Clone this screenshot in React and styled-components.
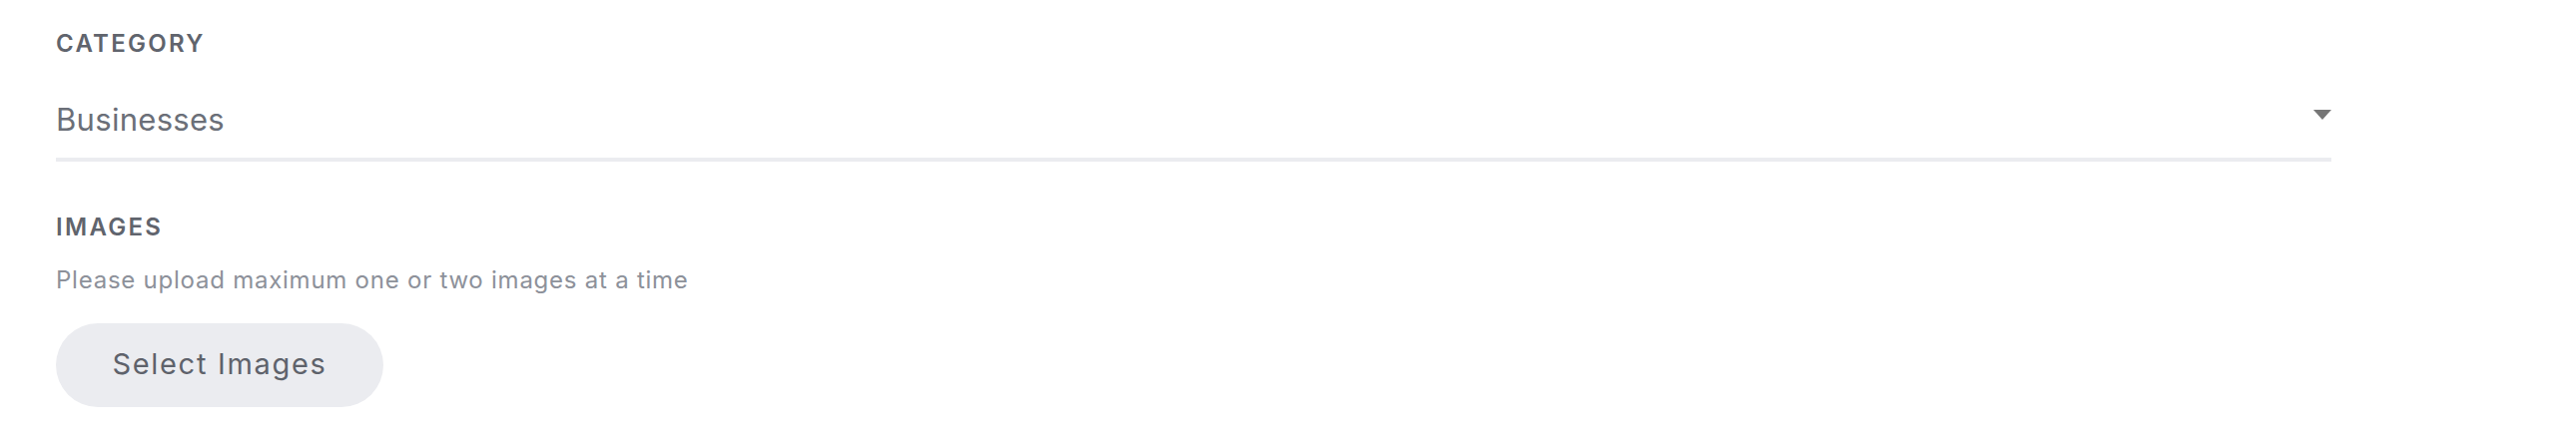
import React from "react";
import styled, { createGlobalStyle } from "styled-components";

const Global = createGlobalStyle`
  html, body { margin: 0; padding: 0; background: #ffffff; }
  body {
    font-family: Inter, "Noto Sans", sans-serif;
    -webkit-font-smoothing: antialiased;
  }
`;

const Page = styled.div`
  padding: 32px 0 0 56px;
  width: 2279px;
`;

const Field = styled.section`
  display: flex;
  flex-direction: column;
  margin-bottom: ${(p) => p.$gap || 0}px;
`;

const Label = styled.div`
  font-size: 24px;
  line-height: 24px;
  font-weight: 600;
  letter-spacing: 2.3px;
  color: #60646d;
  text-transform: uppercase;
`;

const SelectBox = styled.div`
  margin-top: 49px;
  display: flex;
  align-items: center;
  justify-content: space-between;
  padding-bottom: 23px;
  border-bottom: 4px solid #ebecf0;
`;

const SelectValue = styled.span`
  font-size: 31px;
  line-height: 30px;
  letter-spacing: 0.3px;
  color: #6b6f78;
`;

const Caret = styled.svg`
  width: 18px;
  height: 10px;
  margin-top: -10px;
  display: block;
`;

const Helper = styled.p`
  margin: 29px 0 0;
  font-size: 24px;
  line-height: 23px;
  letter-spacing: 0.76px;
  color: #8d919a;
`;

const UploadButton = styled.button`
  margin-top: 32px;
  width: 328px;
  height: 84px;
  padding: 0 0 3px;
  border: none;
  border-radius: 42px;
  background: #ebecf0;
  color: #5e626b;
  font-family: Inter, "Noto Sans", sans-serif;
  font-size: 29px;
  letter-spacing: 1.7px;
  display: flex;
  align-items: center;
  justify-content: center;
  cursor: pointer;
`;

export default function App() {
  return (
    <>
      <Global />
      <Page>
        <Field $gap={54}>
          <Label>Category</Label>
          <SelectBox>
            <SelectValue>Businesses</SelectValue>
            <Caret viewBox="0 0 18 10">
              <path d="M0 0 L18 0 L9 10 Z" fill="#767676" />
            </Caret>
          </SelectBox>
        </Field>
        <Field>
          <Label>Images</Label>
          <Helper>Please upload maximum one or two images at a time</Helper>
          <UploadButton>Select Images</UploadButton>
        </Field>
      </Page>
    </>
  );
}
